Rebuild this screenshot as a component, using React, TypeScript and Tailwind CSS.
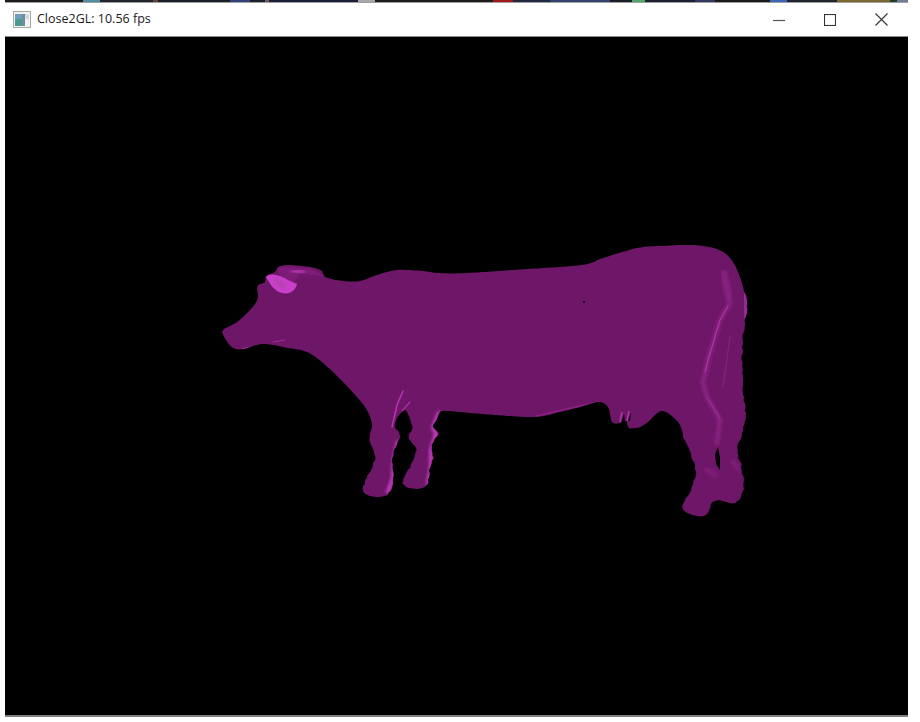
const topStrip = [
  "w-[78px] bg-[#1c1c1c]",
  "w-[17px] bg-[#4f8f9f]",
  "w-[53px] bg-[#20242c]",
  "w-[5px] bg-[#6a4238]",
  "w-[72px] bg-[#1a1e2a]",
  "w-[20px] bg-[#34427a]",
  "w-[15px] bg-[#1c2030]",
  "w-[4px] bg-[#7a5a60]",
  "w-[89px] bg-[#1a2038]",
  "w-[17px] bg-[#a8a8a8]",
  "w-[118px] bg-[#1c1c1c]",
  "w-[20px] bg-[#a01818]",
  "w-[37px] bg-[#202840]",
  "w-[60px] bg-[#34426f]",
  "w-[22px] bg-[#1c1c24]",
  "w-[13px] bg-[#50a86c]",
  "w-[50px] bg-[#1c2030]",
  "w-[20px] bg-[#303a60]",
  "w-[55px] bg-[#1a1a1a]",
  "w-[17px] bg-[#3a68b8]",
  "w-[50px] bg-[#20242c]",
  "w-[53px] bg-[#7a682f]",
  "w-[7px] bg-[#28382c]",
  "w-[11px] bg-[#6e7e94]",
];

const cowPoints: [number, number][] = [
  [222, 332], [224, 329], [230, 326], [237, 322], [243, 317], [249, 311], [255, 304], [258, 297], [257, 288], [258, 285], [265, 282], [266, 276],
  [275, 272], [278, 267], [288, 265], [310, 267], [322, 271], [325, 277], [343, 281], [360, 281], [377, 275], [397, 270],
  [423, 271], [438, 273], [467, 273], [527, 269], [582, 265], [603, 258], [637, 248], [660, 246], [693, 245], [717, 249],
  [730, 258], [738, 272], [743, 287], [747, 307], [744, 327], [742, 363], [744, 400], [746, 418], [742, 433], [739, 443],
  [737, 453], [741, 464], [743, 477], [743, 492], [735, 503], [726, 502], [718, 500], [711, 504], [708, 514], [697, 516],
  [683, 508], [692, 487], [695, 468], [682, 433], [678, 422], [662, 411], [648, 422], [640, 427], [628, 428], [627, 421],
  [620, 423], [612, 422], [608, 407], [598, 402], [580, 407], [560, 412], [533, 417], [483, 414], [448, 411], [440, 412],
  [436, 421], [432, 427], [438, 433], [433, 442], [432, 450], [433, 458], [430, 467], [429, 477], [427, 485], [417, 489],
  [403, 483], [415, 457], [415, 447], [409, 437], [412, 427], [405, 410], [395, 423], [400, 437], [395, 447], [392, 467],
  [393, 480], [387, 495], [370, 496], [363, 488], [375, 458], [370, 440], [372, 425], [365, 407], [343, 382], [323, 363],
  [307, 352], [288, 348], [263, 344], [243, 349], [233, 348], [226, 340],
];

// catmull-rom through the points, with rough edges low on the legs like the rendered mesh
function buildOutline(points: [number, number][]) {
  const out: string[] = [];
  const n = points.length;
  for (let i = 0; i < n; i++) {
    const [x0, y0] = points[(i - 1 + n) % n];
    const [x1, y1] = points[i];
    const [x2, y2] = points[(i + 1) % n];
    const [x3, y3] = points[(i + 2) % n];
    const steps = Math.max(1, Math.round(Math.hypot(x2 - x1, y2 - y1) / 3));
    for (let s = 0; s < steps; s++) {
      const t = s / steps;
      const t2 = t * t;
      const t3 = t2 * t;
      const x = 0.5 * (2 * x1 + (x2 - x0) * t + (2 * x0 - 5 * x1 + 4 * x2 - x3) * t2 + (3 * x1 - x0 - 3 * x2 + x3) * t3);
      const y = 0.5 * (2 * y1 + (y2 - y0) * t + (2 * y0 - 5 * y1 + 4 * y2 - y3) * t2 + (3 * y1 - y0 - 3 * y2 + y3) * t3);
      const rough = y > 425 || (x > 738 && y > 290);
      const jitter = rough ? Math.sin(x * 12.9 + y * 78.2) * 0.8 : 0;
      out.push(`${(x + jitter).toFixed(1)} ${y.toFixed(1)}`);
    }
  }
  return `M${out.join(" L")} Z`;
}

const cowOutline = buildOutline(cowPoints);

function Cow() {
  return (
    <svg viewBox="5 37 903 678" className="block w-full h-full">
      <defs>
        <clipPath id="cow">
          <path d={cowOutline} />
        </clipPath>
        <filter id="soft" x="-50%" y="-50%" width="200%" height="200%">
          <feGaussianBlur stdDeviation="1.6" />
        </filter>
      </defs>
      <path d={cowOutline} fill="#6e1668" />
      <g clipPath="url(#cow)" fill="none" strokeLinecap="round">
        {/* head */}
        <path d="M278 268 L290 267 L310 268 L324 276 L300 274 L292 284 L280 276 Z" fill="#7d1c76" />
        <path d="M293 271 L303 272" stroke="#b536b0" strokeWidth="4" filter="url(#soft)" />
        <path d="M266 277 C270 272 280 275 288 280 L297 284 C296 290 290 295 282 293 C275 292 270 284 266 277 Z" fill="#c93fc9" />
        <path d="M276 280 L284 287" stroke="#ab45a4" strokeWidth="3" filter="url(#soft)" />
        <path d="M243 349 L265 345" stroke="#a32ca0" strokeWidth="2" />
        <path d="M273 342 L285 340" stroke="#a32ca0" strokeWidth="1" />

        {/* front legs */}
        <path d="M403 391 L397 405 L392 427" stroke="#b634b4" strokeWidth="1.5" />
        <path d="M410 402 L403 410 L397 422" stroke="#a62ca4" strokeWidth="1.5" />
        <path d="M398 442 L394 458 L393 478 L388 492" stroke="#c23cc0" strokeWidth="4" filter="url(#soft)" />
        <path d="M439 413 L433 427 L436 434 L431 450 L431 466 L428 484" stroke="#c23cc0" strokeWidth="4" filter="url(#soft)" />

        {/* rear legs and tail */}
        <path d="M724 274 L729 298" stroke="#86207f" strokeWidth="7" filter="url(#soft)" />
        <path d="M730 303 L720 320 L708 360 L703 383 L707 397 L720 420 L717 443" stroke="#86207f" strokeWidth="5" filter="url(#soft)" />
        <path d="M728 306 L720 320 L708 360 L705 372" stroke="#b536b2" strokeWidth="1" />
        <path d="M707 397 L720 418" stroke="#a02c9c" strokeWidth="1" />
        <path d="M730 337 L723 387" stroke="#82207c" strokeWidth="1.5" />
        <path d="M745 290 L746 318" stroke="#9c299a" strokeWidth="6" filter="url(#soft)" />
        <path d="M707 470 L715 475" stroke="#7e1e78" strokeWidth="6" filter="url(#soft)" />
        <path d="M733 462 L738 469" stroke="#7e1e78" strokeWidth="5" filter="url(#soft)" />
        <path d="M536 416 L598 402" stroke="#8b2186" strokeWidth="1.5" />
      </g>

      {/* udder gaps and stray pixels */}
      <path d="M621 423 L624 414 L625 422 Z M628 421 L631 412 L630 421 Z" fill="#000" />
      <path d="M622 412 L620 422 M629 411 L627 421" stroke="#b634b4" strokeWidth="1.5" />
      <rect x="583" y="301" width="2" height="2" fill="#2c0a2a" />
      <path d="M718 447 L720 458 L720 470 L716 464 L715 454 Z" fill="#000" />
    </svg>
  );
}

function WindowIcon() {
  return (
    <svg width="18" height="17" viewBox="0 0 18 17" className="shrink-0">
      <rect x="0.5" y="0.5" width="17" height="16" fill="#f2f2f2" stroke="#a8a8a8" />
      <rect x="2" y="3" width="7" height="12" fill="#4a9a8c" />
      <rect x="2" y="3" width="7" height="5" fill="#6f9fba" />
      <rect x="9" y="3" width="3" height="12" fill="#6d8da2" />
      <rect x="12" y="3" width="4" height="5" fill="#d0dcdc" />
    </svg>
  );
}

export default function App() {
  return (
    <div className="w-[920px] h-[722px] bg-white overflow-hidden flex flex-col font-['Open_Sans',sans-serif]">
      <div className="ml-[5px] w-[903px] h-[3px] flex border-b border-[#a0a0a0]">
        {topStrip.map((segment, index) => (
          <div key={index} className={segment} />
        ))}
      </div>

      <div className="h-[33px] ml-[13px] mr-[13px] shrink-0 flex items-center">
        <WindowIcon />
        <span className="ml-[6px] text-[12.5px] text-[#1a1a1a]">Close2GL: 10.56 fps</span>
        <div className="ml-auto flex items-center">
          <div className="w-[51px] h-[32px] flex items-center justify-center">
            <svg width="12" height="12" viewBox="0 0 12 12">
              <path d="M0 6.5 H12" stroke="#555" strokeWidth="1.2" />
            </svg>
          </div>
          <div className="w-[51px] h-[32px] flex items-center justify-center">
            <svg width="12" height="12" viewBox="0 0 12 12">
              <rect x="0.5" y="0.5" width="11" height="11" fill="none" stroke="#333" strokeWidth="1.1" />
            </svg>
          </div>
          <div className="w-[52px] h-[32px] flex items-center justify-center">
            <svg width="13" height="13" viewBox="0 0 13 13">
              <path d="M0.5 0.5 L12.5 12.5 M12.5 0.5 L0.5 12.5" stroke="#333" strokeWidth="1.1" />
            </svg>
          </div>
        </div>
      </div>

      <div className="ml-[5px] w-[903px] border-t border-[#8a8a8a]">
        <div className="h-[678px] bg-black">
          <Cow />
        </div>
        <div className="h-[2px] bg-[#808080]" />
      </div>
    </div>
  );
}
